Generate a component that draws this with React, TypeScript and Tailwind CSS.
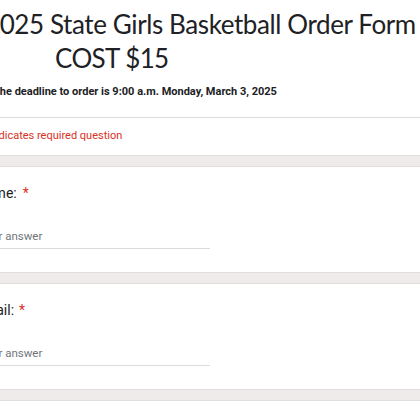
export default function App() {
  return (
    <div className="w-[420px] h-[420px] overflow-hidden bg-white font-['Roboto',sans-serif] text-[#202124]">
      {/* Header card */}
      <div className="pt-[7px]">
        <h1 className="-ml-[15px] whitespace-nowrap font-['Lato',sans-serif] text-[26px] leading-[34px] font-normal tracking-[-0.4px]">
          2025 State Girls Basketball Order Form
        </h1>
        <div className="ml-[55px] font-['Lato',sans-serif] text-[26px] leading-[34px] tracking-[-0.6px]">COST $15</div>
        <p className="-ml-[7px] mt-[9px] whitespace-nowrap text-[11px] font-bold leading-[16px]">
          The deadline to order is 9:00 a.m. Monday, March 3, 2025
        </p>
        <div className="mt-[17px] h-px bg-[#dadce0]" />
        <p className="-ml-[18px] pt-[10px] pb-[11px] whitespace-nowrap text-[11px] leading-[16px] text-[#d93025]">
          * Indicates required question
        </p>
      </div>

      <Gap />
      <Question label="Name:" gapStar />
      <Gap />
      <Question label="Email:" />
      <Gap />
    </div>
  );
}

function Gap() {
  return <div className="h-[12px] border-y border-[#e2dede] bg-[#efebeb]" />;
}

function Question({ label, gapStar }: { label: string; gapStar?: boolean }) {
  return (
    <div className="h-[105px] pt-[16px]">
      <div className="-ml-[24px] whitespace-nowrap text-[14px] leading-[20px]">
        {label}
        <span className={gapStar ? "ml-[6px] text-[#d93025]" : "ml-[5px] text-[#d93025]"}>*</span>
      </div>
      <div className="-ml-[21px] mt-[24px] w-[231px] border-b border-[#dadce0] pb-[3px] text-[11.5px] leading-[18px] text-[#70757a]">
        Your answer
      </div>
    </div>
  );
}
